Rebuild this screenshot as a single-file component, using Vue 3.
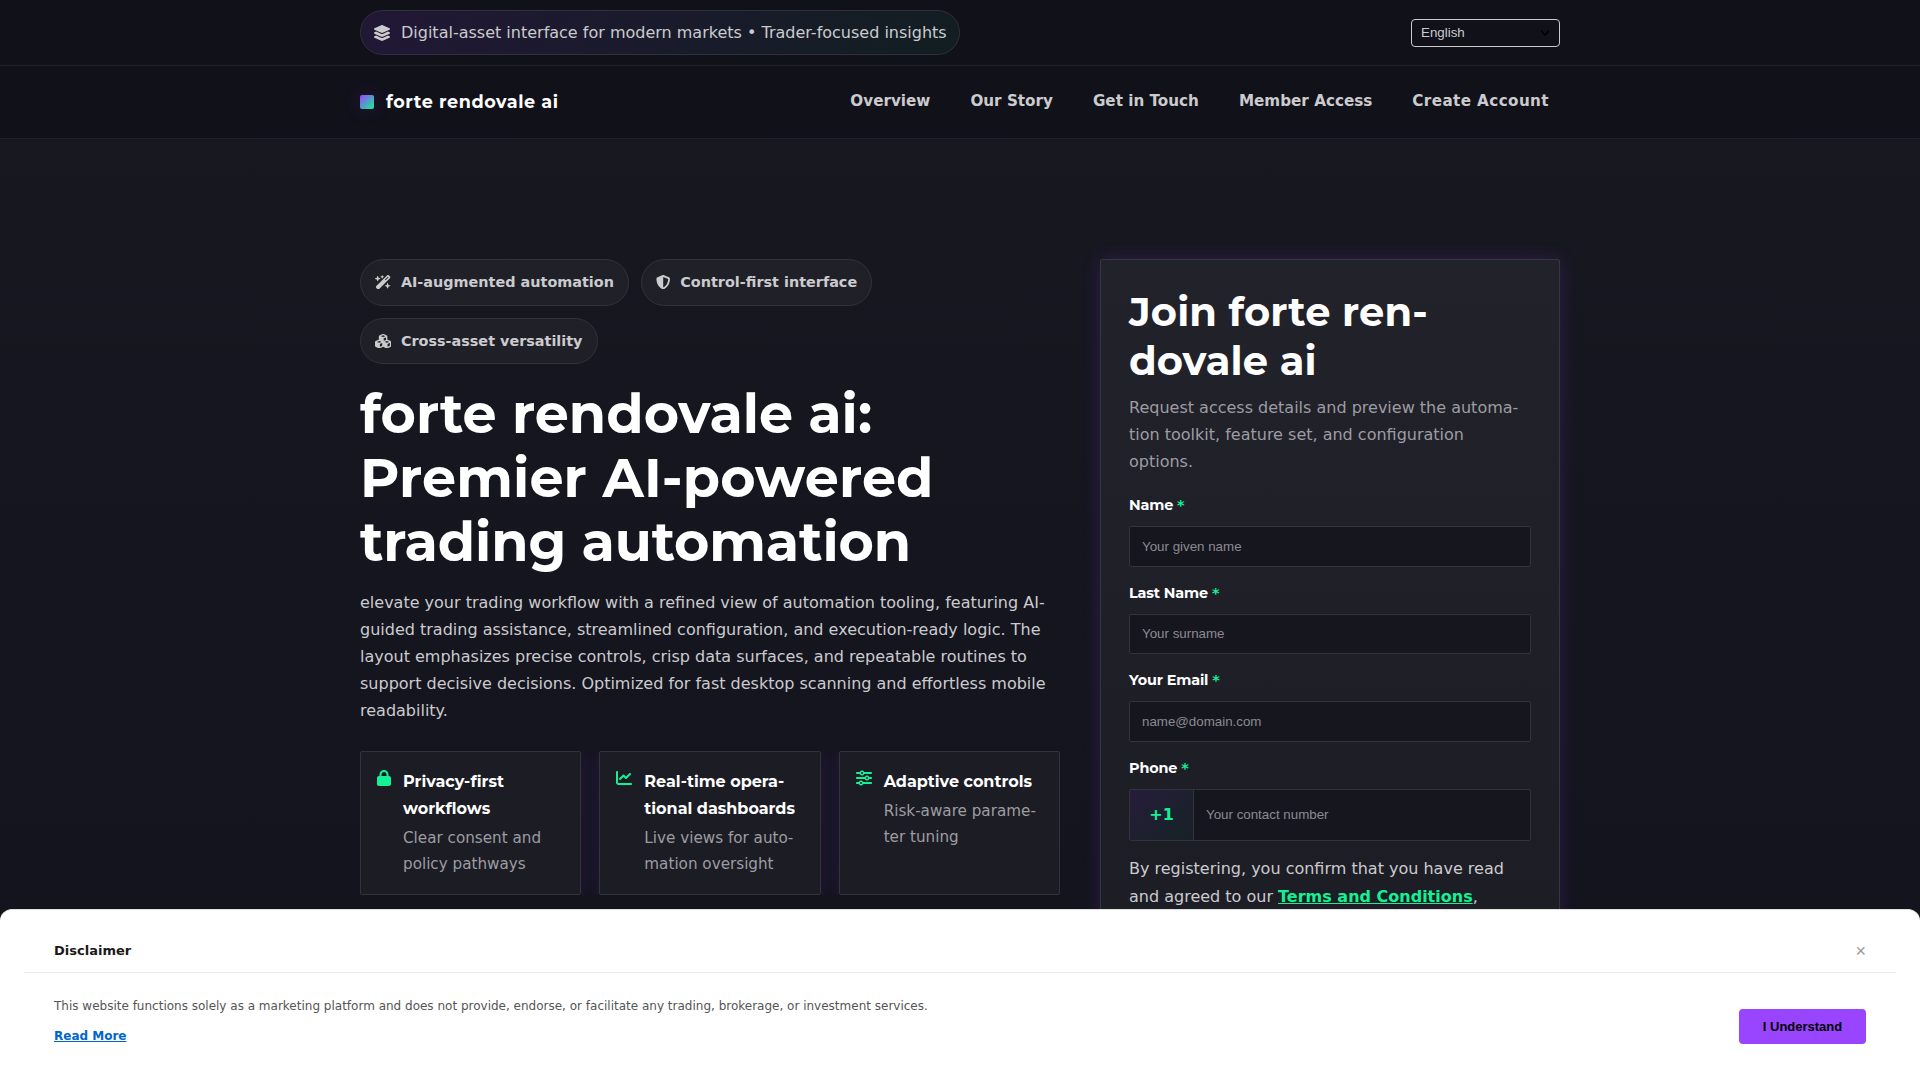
<script setup>
import { ref } from 'vue';

const navLinks = ['Overview', 'Our Story', 'Get in Touch', 'Member Access', 'Create Account'];

// Иконки: viewBox по ширине, высота всегда 512
const icons = {
    layers: {
        w: 576,
        d: 'M264.5 5.2c14.9-6.9 32.1-6.9 47 0l218.6 101c8.5 3.9 13.9 12.4 13.9 21.8s-5.4 17.9-13.9 21.8l-218.6 101c-14.9 6.9-32.1 6.9-47 0L45.9 149.8C37.4 145.8 32 137.3 32 128s5.4-17.9 13.9-21.8L264.5 5.2zM476.9 209.6l53.2 24.6c8.5 3.9 13.9 12.4 13.9 21.8s-5.4 17.9-13.9 21.8l-218.6 101c-14.9 6.9-32.1 6.9-47 0L45.9 277.8C37.4 273.8 32 265.3 32 256s5.4-17.9 13.9-21.8l53.2-24.6 152 70.2c23.4 10.8 50.4 10.8 73.8 0l152-70.2zm-152 198.2l152-70.2 53.2 24.6c8.5 3.9 13.9 12.4 13.9 21.8s-5.4 17.9-13.9 21.8l-218.6 101c-14.9 6.9-32.1 6.9-47 0L45.9 405.8C37.4 401.8 32 393.3 32 384s5.4-17.9 13.9-21.8l53.2-24.6 152 70.2c23.4 10.8 50.4 10.8 73.8 0z',
    },
    wand: {
        w: 576,
        d: 'M234.7 42.7L197 56.8c-3 1.1-5 4-5 7.2s2 6.1 5 7.2l37.7 14.1L248.8 123c1.1 3 4 5 7.2 5s6.1-2 7.2-5l14.1-37.7L315 71.2c3-1.1 5-4 5-7.2s-2-6.1-5-7.2L277.3 42.7 263.2 5c-1.1-3-4-5-7.2-5s-6.1 2-7.2 5L234.7 42.7zM46.1 395.4c-18.7 18.7-18.7 49.1 0 67.9l34.6 34.6c18.7 18.7 49.1 18.7 67.9 0L529.9 116.5c18.7-18.7 18.7-49.1 0-67.9L495.3 14.1c-18.7-18.7-49.1-18.7-67.9 0L46.1 395.4zM484.6 82.6l-105 105-23.3-23.3 105-105 23.3 23.3zM7.5 117.2C3 118.9 0 123.2 0 128s3 9.1 7.5 10.8L64 160l21.2 56.5c1.7 4.5 6 7.5 10.8 7.5s9.1-3 10.8-7.5L128 160l56.5-21.2c4.5-1.7 7.5-6 7.5-10.8s-3-9.1-7.5-10.8L128 96 106.8 39.5C105.1 35 100.8 32 96 32s-9.1 3-10.8 7.5L64 96 7.5 117.2zm352 256c-4.5 1.7-7.5 6-7.5 10.8s3 9.1 7.5 10.8L416 416l21.2 56.5c1.7 4.5 6 7.5 10.8 7.5s9.1-3 10.8-7.5L480 416l56.5-21.2c4.5-1.7 7.5-6 7.5-10.8s-3-9.1-7.5-10.8L480 352l-21.2-56.5c-1.7-4.5-6-7.5-10.8-7.5s-9.1 3-10.8 7.5L416 352l-56.5 21.2z',
    },
    shield: {
        w: 512,
        d: 'M256 0c4.6 0 9.2 1 13.4 2.9L457.7 82.8c22 9.3 38.4 31 38.3 57.2c-.5 99.2-41.3 280.7-213.6 363.2c-16.7 8-36.1 8-52.8 0C57.3 420.7 16.5 239.2 16 140c-.1-26.2 16.3-47.9 38.3-57.2L242.7 2.9C246.8 1 251.4 0 256 0zm0 66.8V444.8C394 378 431.1 230.1 432 141.4L256 66.8l0 0z',
    },
    cubes: {
        w: 576,
        d: 'M290.8 48.6l78.4 29.7L288 109.5 206.8 78.3l78.4-29.7c1.8-.7 3.8-.7 5.7 0zM136 92.5V204.7c-1.3 .4-2.6 .8-3.9 1.3l-96 36.4C14.4 250.6 0 271.5 0 294.7V413.9c0 22.2 13.1 42.3 33.5 51.3l96 42.2c14.4 6.3 30.7 6.3 45.1 0L288 457.5l113.5 49.9c14.4 6.3 30.7 6.3 45.1 0l96-42.2c20.3-8.9 33.5-29.1 33.5-51.3V294.7c0-23.3-14.4-44.1-36.1-52.4l-96-36.4c-1.3-.5-2.6-.9-3.9-1.3V92.5c0-23.3-14.4-44.1-36.1-52.4l-96-36.4c-12.8-4.8-26.9-4.8-39.7 0l-96 36.4C150.4 48.4 136 69.3 136 92.5zM392 210.6l-82.4 31.2V152.6L392 121v89.6zM154.8 250.9l78.4 29.7L152 311.7 70.8 280.6l78.4-29.7c1.8-.7 3.8-.7 5.7 0zm18.8 204.4V354.8L256 323.2v95.9l-82.4 36.2zM421.2 250.9c1.8-.7 3.8-.7 5.7 0l78.4 29.7L424 311.7l-81.2-31.1 78.4-29.7zM523.2 421.2l-77.6 34.1V354.8L528 323.2v90.7c0 3.2-1.9 6-4.8 7.3z',
    },
    lock: {
        w: 448,
        d: 'M144 144v48H304V144c0-44.2-35.8-80-80-80s-80 35.8-80 80zM80 192V144C80 64.5 144.5 0 224 0s144 64.5 144 144v48h16c35.3 0 64 28.7 64 64V448c0 35.3-28.7 64-64 64H64c-35.3 0-64-28.7-64-64V256c0-35.3 28.7-64 64-64H80z',
    },
    chart: {
        w: 512,
        d: 'M64 64c0-17.7-14.3-32-32-32S0 46.3 0 64V400c0 44.2 35.8 80 80 80H480c17.7 0 32-14.3 32-32s-14.3-32-32-32H80c-8.8 0-16-7.2-16-16V64zm406.6 86.6c12.5-12.5 12.5-32.8 0-45.3s-32.8-12.5-45.3 0L320 210.7l-57.4-57.4c-12.5-12.5-32.8-12.5-45.3 0l-112 112c-12.5 12.5-12.5 32.8 0 45.3s32.8 12.5 45.3 0L240 221.3l57.4 57.4c12.5 12.5 32.8 12.5 45.3 0l128-128z',
    },
    sliders: {
        w: 512,
        d: 'M0 416c0 17.7 14.3 32 32 32l54.7 0c12.3 28.3 40.5 48 73.3 48s61-19.7 73.3-48L480 448c17.7 0 32-14.3 32-32s-14.3-32-32-32l-246.7 0c-12.3-28.3-40.5-48-73.3-48s-61 19.7-73.3 48L32 384c-17.7 0-32 14.3-32 32zm128 0a32 32 0 1 1 64 0 32 32 0 1 1 -64 0zM320 256a32 32 0 1 1 64 0 32 32 0 1 1 -64 0zm32-80c-32.8 0-61 19.7-73.3 48L32 224c-17.7 0-32 14.3-32 32s14.3 32 32 32l246.7 0c12.3 28.3 40.5 48 73.3 48s61-19.7 73.3-48l54.7 0c17.7 0 32-14.3 32-32s-14.3-32-32-32l-54.7 0c-12.3-28.3-40.5-48-73.3-48zM192 128a32 32 0 1 1 0-64 32 32 0 1 1 0 64zm73.3-64C253 35.7 224.8 16 192 16s-61 19.7-73.3 48L32 64C14.3 64 0 78.3 0 96s14.3 32 32 32l86.7 0c12.3 28.3 40.5 48 73.3 48s61-19.7 73.3-48L480 128c17.7 0 32-14.3 32-32s-14.3-32-32-32L265.3 64z',
    },
};

const badges = [
    { icon: 'wand',   text: 'AI-augmented automation' },
    { icon: 'shield', text: 'Control-first interface' },
    { icon: 'cubes',  text: 'Cross-asset versatility' },
];

// \u00AD — мягкие переносы
const features = [
    { icon: 'lock',    title: 'Privacy-first workflows',            text: 'Clear consent and policy pathways' },
    { icon: 'chart',   title: 'Real-time opera\u00ADtional dashboards', text: 'Live views for auto\u00ADmation oversight' },
    { icon: 'sliders', title: 'Adaptive controls',                  text: 'Risk-aware parame\u00ADter tuning' },
];

const fields = [
    { id: 'name',     label: 'Name',       type: 'text',  placeholder: 'Your given name' },
    { id: 'lastName', label: 'Last Name',  type: 'text',  placeholder: 'Your surname' },
    { id: 'email',    label: 'Your Email', type: 'email', placeholder: 'name@domain.com' },
];

const form = ref({ name: '', lastName: '', email: '', phone: '' });
const showDisclaimer = ref(true);
</script>

<template>
    <div class="page">
        <!-- Верхняя полоса -->
        <div class="topbar">
            <div class="container topbar-inner">
                <div class="promo">
                    <svg class="icon promo-icon" viewBox="0 0 576 512"><path :d="icons.layers.d" /></svg>
                    <span>Digital-asset interface for modern markets • Trader-focused insights</span>
                </div>
                <button class="lang" type="button">
                    <span>English</span>
                    <svg class="lang-arrow" viewBox="0 0 10 6"><path d="M1 .8 5 5 9 .8" /></svg>
                </button>
            </div>
        </div>

        <header class="header">
            <div class="container header-inner">
                <a class="brand"><span class="brand-mark"></span><span class="brand-name">forte rendovale ai</span></a>
                <nav class="nav">
                    <a v-for="link in navLinks" :key="link" class="nav-link">{{ link }}</a>
                </nav>
            </div>
        </header>

        <main class="container hero">
            <section class="hero-main">
                <div class="badges">
                    <span v-for="b in badges" :key="b.text" class="badge">
                        <svg class="icon badge-icon" :class="'badge-icon--' + b.icon" :viewBox="`0 0 ${icons[b.icon].w} 512`"><path :d="icons[b.icon].d" /></svg>
                        <span>{{ b.text }}</span>
                    </span>
                </div>
                <h1 class="hero-title">
                    forte rendovale ai:<br>
                    <span class="hero-title-wide">Premier AI-powered</span><br>
                    <span class="hero-title-tight">trading automation</span>
                </h1>
                <p class="hero-text">
                    elevate your trading workflow with a refined view of automation tooling, featuring AI-guided
                    trading assistance, streamlined configuration, and execution-ready logic. The layout emphasizes
                    precise controls, crisp data surfaces, and repeatable routines to support decisive decisions.
                    Optimized for fast desktop scanning and effortless mobile readability.
                </p>
                <div class="features">
                    <article v-for="f in features" :key="f.icon" class="feature">
                        <svg class="icon feature-icon" :class="'feature-icon--' + f.icon" :viewBox="`0 0 ${icons[f.icon].w} 512`"><path :d="icons[f.icon].d" /></svg>
                        <div class="feature-body">
                            <div class="feature-title">{{ f.title }}</div>
                            <div class="feature-text">{{ f.text }}</div>
                        </div>
                    </article>
                </div>
            </section>

            <!-- Форма регистрации -->
            <aside class="signup">
                <h2 class="signup-title">Join forte ren&shy;dovale ai</h2>
                <p class="signup-text">Request access details and preview the automa&shy;tion toolkit, feature set, and configuration options.</p>
                <div v-for="f in fields" :key="f.id" class="field">
                    <label class="label" :for="f.id">{{ f.label }} <span class="req">*</span></label>
                    <input :id="f.id" v-model="form[f.id]" class="input" :type="f.type" :placeholder="f.placeholder" />
                </div>
                <div class="field">
                    <label class="label" for="phone">Phone <span class="req">*</span></label>
                    <div class="phone">
                        <span class="phone-code">+1</span>
                        <input id="phone" v-model="form.phone" class="phone-input" type="tel" placeholder="Your contact number" />
                    </div>
                </div>
                <p class="consent">
                    By registering, you confirm that you have read and agreed to our <a class="consent-link">Terms and Conditions</a>,
                </p>
            </aside>
        </main>

        <!-- Плашка с дисклеймером поверх страницы -->
        <div v-if="showDisclaimer" class="disclaimer">
            <div class="disclaimer-head">
                <strong class="disclaimer-title">Disclaimer</strong>
                <button class="disclaimer-close" type="button" @click="showDisclaimer = false">×</button>
            </div>
            <div class="disclaimer-body">
                <div>
                    <p class="disclaimer-text">This website functions solely as a marketing platform and does not provide, endorse, or facilitate any trading, brokerage, or investment services.</p>
                    <a class="disclaimer-more">Read More</a>
                </div>
                <button class="disclaimer-ok" type="button" @click="showDisclaimer = false">I Understand</button>
            </div>
        </div>
    </div>
</template>

<style>
html, body { margin: 0; overflow: hidden; background: #14141e; }
</style>

<style scoped>
.page {
    height: 1080px;
    overflow: hidden;
    background: linear-gradient(180deg, #181821 0%, #13131d 100%);
    color: #cbcbce;
    font-family: "DejaVu Sans", sans-serif;
    font-size: 16px;
    line-height: 27px;
}
.container { width: 1200px; margin: 0 auto; }
.icon { display: block; flex-shrink: 0; fill: currentColor; }

/* Верхняя полоса */
.topbar { background: #11111a; border-bottom: 1px solid #20202a; }
.topbar-inner {
    display: flex; align-items: center; justify-content: space-between;
    height: 65px;
}
.promo {
    display: flex; align-items: center; gap: 10px; box-sizing: border-box;
    height: 45px; padding: 0 12px; white-space: nowrap;
    border: 1px solid #302f3b; border-radius: 999px;
    background: linear-gradient(135deg, rgba(153,69,255,0.12), rgba(20,241,149,0.06));
}
.promo-icon { width: 18px; height: 16px; }
.lang {
    display: flex; align-items: center; justify-content: space-between; box-sizing: border-box;
    width: 149px; height: 28px; padding: 0 9px;
    border: 1px solid #cbcbce; border-radius: 4px; background: transparent;
    color: #cbcbce; font: 13.333px "Liberation Sans", Arial, sans-serif;
}
.lang-arrow { width: 10px; height: 6px; fill: none; stroke: #000; stroke-width: 1.6; }

.header { background: #11111a; border-bottom: 1px solid #20202a; }
.header-inner {
    display: flex; align-items: center; justify-content: space-between;
    height: 72px;
}
.brand { display: flex; align-items: center; gap: 12px; }
.brand-mark {
    width: 14px; height: 14px; border-radius: 2px;
    background: linear-gradient(135deg, #9945ff, #14f195);
    box-shadow: 0 0 18px rgba(153,69,255,0.18);
}
.brand-name {
    font-family: Montserrat, "Open Sans", sans-serif; font-size: 17.6px; font-weight: 700;
    line-height: 30px; letter-spacing: 0.58px; color: #fff;
}
.nav { display: flex; gap: 16px; margin-bottom: 2px; }
.nav-link { padding: 0 12px; font-size: 15.2px; font-weight: 700; line-height: 26px; }
.nav-link:last-child { padding-right: 11px; letter-spacing: 0.4px; }

/* Первый экран */
.hero { display: flex; align-items: flex-start; gap: 40px; padding-top: 120px; }
.hero-main { width: 700px; }
.badges { display: flex; flex-wrap: wrap; gap: 12px; }
.badge {
    display: flex; align-items: center; gap: 9.7px; box-sizing: border-box;
    height: 46.5px; padding: 0 14.3px 0 14px;
    border: 1px solid #32323b; border-radius: 999px; background: rgba(255,255,255,0.04);
    font-size: 14.4px; font-weight: 700; line-height: 1.7;
}
.badge-icon { height: 14.4px; width: 16.2px; }
.badge-icon--shield { width: 14.4px; }
.hero-title {
    margin: 18px 0 0; font-family: Montserrat, "Open Sans", sans-serif;
    font-size: 54px; font-weight: 700; line-height: 64px; color: #fff; white-space: nowrap;
}
.hero-title-wide { letter-spacing: 0.13px; }
.hero-title-tight { letter-spacing: -0.12px; }
.hero-text { margin: 15px 0 0; }
.features {
    display: grid; grid-template-columns: repeat(3, 1fr); gap: 18px;
    margin-top: 27px; overflow: hidden;
}
.feature {
    display: flex; gap: 12px; box-sizing: border-box; height: 144px; padding: 16px;
    border: 1px solid #33333c; border-radius: 2px; background: #1c1c25;
    box-shadow: 0 0 18px rgba(153,69,255,0.15);
}
.feature-icon { width: 16px; height: 16px; margin-top: 2px; color: #14f195; }
.feature-icon--lock { width: 14px; }
.feature-title {
    font-family: Montserrat, "Open Sans", sans-serif; font-weight: 700; color: #fff;
}
.feature-text { margin-top: 3px; font-size: 15.2px; line-height: 26px; color: #9d9da1; }

/* Карточка регистрации */
.signup {
    box-sizing: border-box; width: 460px; height: 900px; padding: 27px 28px;
    border: 1px solid #36363f; border-radius: 2px;
    background: linear-gradient(180deg, #22222b, #1b1b24);
    box-shadow: 0 0 18px rgba(153,69,255,0.18);
}
.signup-title {
    margin: 0; font-family: Montserrat, "Open Sans", sans-serif;
    font-size: 40px; font-weight: 700; line-height: 49px; letter-spacing: 0.15px; color: #fff;
}
.signup-text { margin: 9px 0 18px; color: #9d9da1; }
.field { margin-bottom: 14px; }
.label {
    display: block; font-family: Montserrat, "Open Sans", sans-serif;
    font-size: 14.4px; font-weight: 700; line-height: 24px; letter-spacing: -0.15px; color: #fff;
}
.req { font-family: "DejaVu Sans", sans-serif; line-height: 1; color: #14f195; }
.input {
    display: block; box-sizing: border-box; width: 100%; height: 40.5px; margin-top: 9px; padding: 0 12px;
    border: 1px solid #33333c; border-radius: 2px; outline: none; background: #16161f;
    color: #fff; font: 13.333px "Liberation Sans", Arial, sans-serif;
}
.input::placeholder, .phone-input::placeholder { color: #8b8b8f; opacity: 1; }
.phone {
    display: flex; box-sizing: border-box; height: 52.5px; margin-top: 9px;
    border: 1px solid #33333c; border-radius: 2px; background: #16161f;
}
.phone-code {
    display: flex; align-items: center; justify-content: center; box-sizing: border-box;
    width: 64px; border-right: 1px solid #33333c;
    background: linear-gradient(135deg, rgba(153,69,255,0.12), rgba(20,241,149,0.06));
    color: #14f195; font-weight: 700;
}
.phone-input {
    flex: 1; min-width: 0; padding: 0 12px; border: 0; outline: none; background: transparent;
    color: #fff; font: 13.333px "Liberation Sans", Arial, sans-serif;
}
.consent { margin: 0; line-height: 28px; }
.consent-link { color: #14f195; font-weight: 700; text-decoration: underline; }

/* Дисклеймер */
.disclaimer {
    position: fixed; left: 0; right: 0; bottom: 0; box-sizing: border-box; height: 171px; padding: 18px 24px;
    border-top: 1px solid #e0e0e0; border-radius: 12px 12px 0 0; background: #fff;
    color: #555;
}
.disclaimer-head {
    display: flex; align-items: center; justify-content: space-between; box-sizing: border-box;
    height: 45px; padding: 1px 30px 0; border-bottom: 1px solid #eaeaea;
}
.disclaimer-title { font-size: 13px; color: #1a1a1a; }
.disclaimer-close {
    padding: 1px 0 0; border: 0; background: none; color: #999;
    font: 18px/1 "Liberation Sans", Arial, sans-serif;
}
.disclaimer-body { display: flex; justify-content: space-between; padding: 22px 30px 0; }
.disclaimer-text { margin: 0; font-size: 12px; line-height: 22px; }
.disclaimer-more {
    display: block; margin-top: 8px; font-size: 12px; line-height: 22px; font-weight: 700;
    color: #0066cc; text-decoration: underline;
}
.disclaimer-ok {
    width: 127px; height: 35px; margin-top: 14px; padding: 0; border: 0; border-radius: 4px;
    background: #9945ff; color: #000; font: bold 13px "Liberation Sans", Arial, sans-serif;
}
</style>
